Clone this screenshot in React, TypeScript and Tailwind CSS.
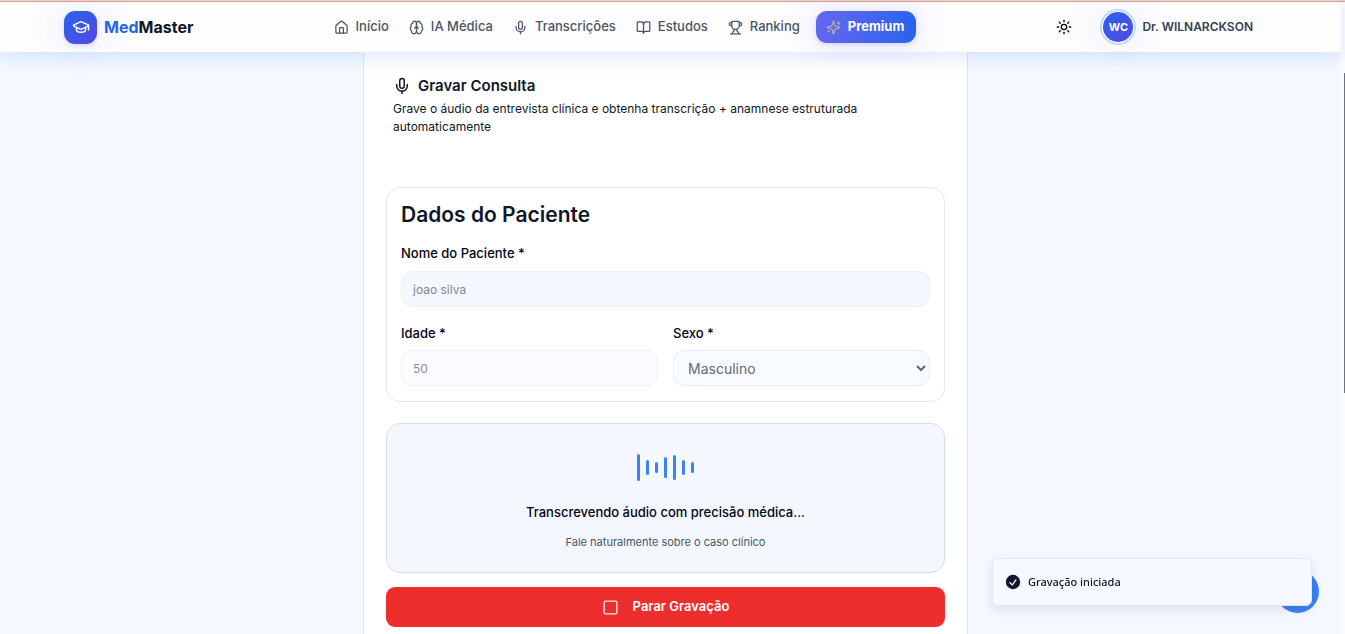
import { useState } from "react";
import { BookOpen, GraduationCap, House, Mic, Square, Sun, Trophy } from "lucide-react";

interface IconProps {
  size?: number;
  className?: string;
}

function BrainIcon({ size = 24, className }: IconProps) {
  return (
    <svg
      width={size}
      height={size}
      viewBox="0 0 24 24"
      fill="none"
      stroke="currentColor"
      strokeWidth="2"
      strokeLinecap="round"
      strokeLinejoin="round"
      className={className}
      aria-hidden="true"
    >
      <path d="M12 5a3 3 0 1 0-5.997.125 4 4 0 0 0-2.526 5.77 4 4 0 0 0 .556 6.588A4 4 0 1 0 12 18Z" />
      <path d="M12 5a3 3 0 1 1 5.997.125 4 4 0 0 1 2.526 5.77 4 4 0 0 1-.556 6.588A4 4 0 1 1 12 18Z" />
      <path d="M15 13a4.5 4.5 0 0 1-3-4 4.5 4.5 0 0 1-3 4" />
    </svg>
  );
}

function SparkleIcon({ size = 24, className }: IconProps) {
  return (
    <svg
      width={size}
      height={size}
      viewBox="0 0 24 24"
      fill="none"
      stroke="currentColor"
      strokeWidth="2"
      strokeLinecap="round"
      strokeLinejoin="round"
      className={className}
      aria-hidden="true"
    >
      <path d="M9.937 15.5A2 2 0 0 0 8.5 14.063l-6.135-1.582a.5.5 0 0 1 0-.962L8.5 9.936A2 2 0 0 0 9.937 8.5l1.582-6.135a.5.5 0 0 1 .963 0L14.063 8.5A2 2 0 0 0 15.5 9.937l6.135 1.581a.5.5 0 0 1 0 .964L15.5 14.063a2 2 0 0 0-1.437 1.437l-1.582 6.135a.5.5 0 0 1-.963 0z" />
      <path d="M20 3v4M22 5h-4M4 17v2M5 18H3" />
    </svg>
  );
}

const navItems = [
  { label: "Início", icon: House },
  { label: "IA Médica", icon: BrainIcon },
  { label: "Transcrições", icon: Mic },
  { label: "Estudos", icon: BookOpen },
  { label: "Ranking", icon: Trophy },
];

const waveBars = [27, 15, 11, 21, 25, 15, 11];

function Header() {
  return (
    <header className="relative z-10 h-[51px] border-t border-[#c9a59c] bg-[#fdfdfe] px-16 shadow-[0_4px_18px_2px_rgba(59,130,246,0.16)]">
      <div className="flex h-full items-center justify-between">
        <a href="#" className="flex items-center gap-[7px]">
          <span className="flex size-[33px] items-center justify-center rounded-[11px] bg-linear-to-br from-[#2563eb] to-[#4f46e5] text-white shadow-[0_2px_4px_rgba(79,70,229,0.15),0_0_30px_8px_rgba(99,102,241,0.08)]">
            <GraduationCap size={18} />
          </span>
          <span className="text-[16px] leading-6 font-bold text-gray-900">
            <span className="text-[#2563eb]">Med</span>Master
          </span>
        </a>

        <nav className="flex items-center gap-5 text-[13px] font-medium text-gray-600">
          {navItems.map(({ label, icon: Icon }) => (
            <a key={label} href="#" className="flex items-center gap-[7px]">
              <Icon size={15} />
              {label}
            </a>
          ))}
          <a
            href="#"
            className="-ml-1 flex h-8 items-center gap-[7px] rounded-[11px] bg-linear-to-r from-[#6366f1] to-[#2563eb] pr-3 pl-[10px] font-bold text-white shadow-[0_2px_4px_rgba(79,70,229,0.15),0_0_28px_6px_rgba(99,102,241,0.12)]"
          >
            <SparkleIcon size={15} className="text-amber-200 opacity-55" />
            Premium
          </a>
        </nav>

        <div className="flex items-center gap-7 pr-6">
          <button type="button" aria-label="Alternar tema" className="text-gray-950">
            <Sun size={16} />
          </button>
          <button type="button" className="flex items-center gap-1.5 text-[12px] font-semibold text-gray-700">
            <span className="flex size-9 items-center justify-center rounded-full border-2 border-[#bfdbfe] bg-white p-px shadow-[0_0_30px_8px_rgba(99,102,241,0.06)]">
              <span className="flex size-full items-center justify-center rounded-full bg-linear-to-br from-[#2563eb] to-[#4f46e5] text-[11px] font-bold text-white">
                WC
              </span>
            </span>
            Dr. WILNARCKSON
          </button>
        </div>
      </div>
    </header>
  );
}

function PatientForm() {
  const [sex, setSex] = useState("Masculino");

  return (
    <section className="rounded-[14px] border border-gray-200 px-3.5 pt-3 pb-[15px]">
      <h2 className="text-[21px] leading-[29px] font-semibold text-slate-900">Dados do Paciente</h2>
      <div className="mt-[15px] flex flex-col gap-[9px]">
        <label htmlFor="name" className="text-[13px] leading-[18px] font-medium text-slate-950">
          Nome do Paciente *
        </label>
        <input
          id="name"
          disabled
          defaultValue="joao silva"
          className="h-9 w-full rounded-[11px] border border-[#eef2f7] bg-[#f3f7fe] px-[11px] text-[12px] text-[#85878c]"
        />
      </div>
      <div className="mt-[17px] grid grid-cols-2 gap-[15px]">
        <div className="flex flex-col gap-2">
          <label htmlFor="age" className="text-[13px] leading-[18px] font-medium text-slate-950">
            Idade *
          </label>
          <input
            id="age"
            disabled
            defaultValue="50"
            className="h-9 w-full rounded-[11px] border border-[#eff1f6] bg-[#fafcff] px-[11px] text-[12px] text-[#8c8d94]"
          />
        </div>
        <div className="flex flex-col gap-2">
          <label htmlFor="sex" className="text-[13px] leading-[18px] font-medium text-slate-950">
            Sexo *
          </label>
          <select
            id="sex"
            value={sex}
            onChange={(e) => setSex(e.target.value)}
            className="h-9 w-full rounded-[11px] border border-[#e9ecf1] bg-[#f8fbff] pl-[10px] text-[14px] text-[#656872]"
          >
            <option>Masculino</option>
            <option>Feminino</option>
          </select>
        </div>
      </div>
    </section>
  );
}

function TranscriptionStatus() {
  return (
    <section className="mt-[21px] flex flex-col items-center rounded-[14px] border border-[#cfe0fb] bg-[#f4f8fe] pt-[29px] pb-[21px]">
      <div className="flex h-[29px] items-center gap-1.5">
        {waveBars.map((height, index) => (
          <span key={index} className="w-[3px] rounded-full bg-[#3b82f6]" style={{ height }}></span>
        ))}
      </div>
      <p className="mt-[21px] text-[13px] leading-[18px] font-medium text-slate-950">
        Transcrevendo áudio com precisão médica...
      </p>
      <p className="mt-3 text-[11px] leading-[18px] text-gray-600">Fale naturalmente sobre o caso clínico</p>
    </section>
  );
}

function Toast() {
  return (
    <>
      <button
        type="button"
        aria-label="Abrir assistente"
        className="fixed right-[26px] bottom-[21px] z-20 size-[43px] rounded-full bg-[#3b82f6]"
      ></button>
      <div
        role="status"
        className="fixed right-[33px] bottom-7 z-30 flex h-12 w-80 items-center gap-1.5 rounded-md border border-gray-200 bg-[#f5f8ff] px-[11px] font-['Noto_Sans',sans-serif] text-[11px] font-medium text-slate-900 shadow-[0_4px_12px_rgba(0,0,0,0.1)]"
      >
        <svg viewBox="0 0 20 20" className="size-4.5 shrink-0" fill="currentColor" aria-hidden="true">
          <path
            fillRule="evenodd"
            clipRule="evenodd"
            d="M10 18a8 8 0 100-16 8 8 0 000 16zm3.857-9.809a.75.75 0 00-1.214-.882l-3.483 4.79-1.88-1.88a.75.75 0 10-1.06 1.061l2.5 2.5a.75.75 0 001.137-.089l4-5.5z"
          />
        </svg>
        Gravação iniciada
      </div>
    </>
  );
}

export default function App() {
  return (
    <div className="flex h-screen overflow-hidden border-t border-[#f4cdc2] bg-[#fcfcfd] font-[Inter,sans-serif]">
      <div className="min-w-0 flex-1 bg-[#f5f8ff]">
        <Header />
        <div className="pr-2.5">
          <main className="mx-auto w-full max-w-[605px] border-x border-[#dfe4f0] bg-white px-[22px] pt-[23px] pb-6">
            <div className="px-[7px] pb-[51px]">
              <h1 className="flex items-center gap-[7px] text-[15px] leading-[21px] font-semibold text-slate-900">
                <Mic size={18} />
                Gravar Consulta
              </h1>
              <p className="mt-1 text-[12px] leading-[18px] text-gray-900">
                Grave o áudio da entrevista clínica e obtenha transcrição + anamnese estruturada automaticamente
              </p>
            </div>
            <PatientForm />
            <TranscriptionStatus />
            <button
              type="button"
              className="mt-3.5 flex h-10 w-full items-center justify-center gap-3.5 rounded-[9px] bg-[#ee2d2d] text-[13px] font-semibold text-white"
            >
              <Square size={17} className="text-red-100" />
              Parar Gravação
            </button>
          </main>
        </div>
      </div>

      {/* Scroll track */}
      <div className="flex w-1 flex-col items-end border-t border-[#c9a59c] pt-[71px]">
        <div className="h-80 w-px bg-gray-500"></div>
      </div>

      <Toast />
    </div>
  );
}
